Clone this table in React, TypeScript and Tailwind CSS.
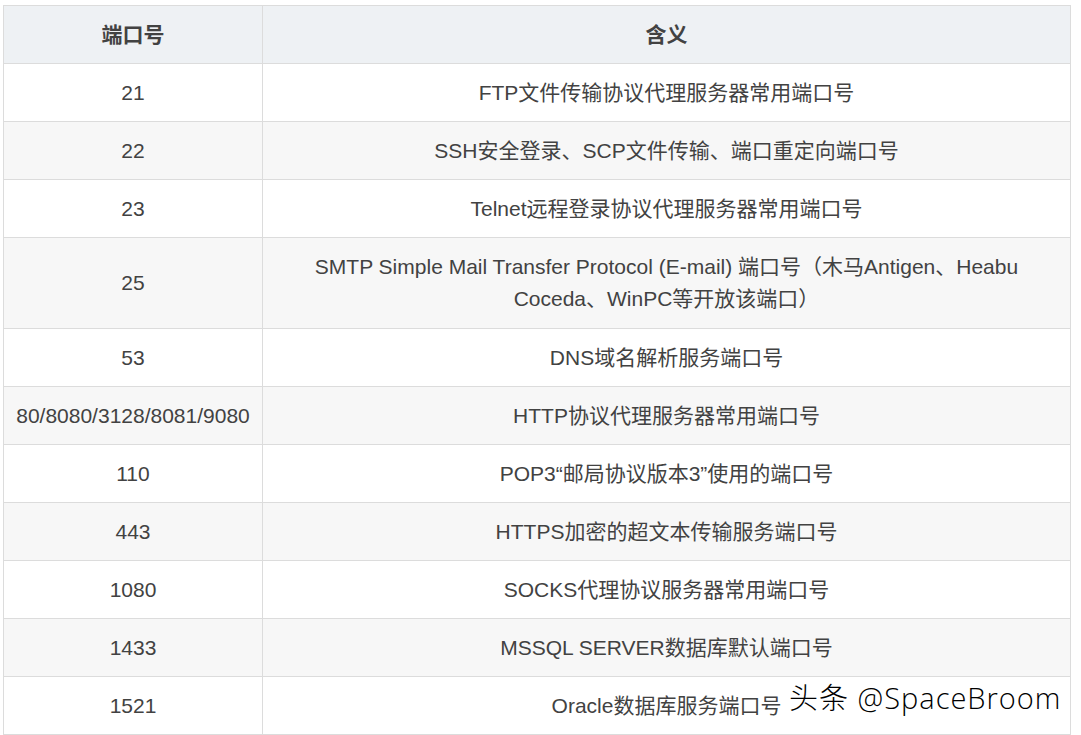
const rows: { port: string; desc: string[] }[] = [
  { port: "21", desc: ["FTP文件传输协议代理服务器常用端口号"] },
  { port: "22", desc: ["SSH安全登录、SCP文件传输、端口重定向端口号"] },
  { port: "23", desc: ["Telnet远程登录协议代理服务器常用端口号"] },
  {
    port: "25",
    desc: [
      "SMTP Simple Mail Transfer Protocol (E-mail) 端口号（木马Antigen、Heabu",
      "Coceda、WinPC等开放该端口）",
    ],
  },
  { port: "53", desc: ["DNS域名解析服务端口号"] },
  { port: "80/8080/3128/8081/9080", desc: ["HTTP协议代理服务器常用端口号"] },
  { port: "110", desc: ["POP3“邮局协议版本3”使用的端口号"] },
  { port: "443", desc: ["HTTPS加密的超文本传输服务端口号"] },
  { port: "1080", desc: ["SOCKS代理协议服务器常用端口号"] },
  { port: "1433", desc: ["MSSQL SERVER数据库默认端口号"] },
  { port: "1521", desc: ["Oracle数据库服务端口号"] },
];

export default function App() {
  return (
    <div
      className="relative h-[735px] w-[1081px] overflow-hidden bg-white pl-[3px] pt-[5px] text-[#424242]"
      style={{ fontFamily: '"Liberation Sans", "Noto Sans CJK SC", sans-serif' }}
    >
      <table className="w-[1068px] border-collapse text-center text-[21px] leading-[32px]">
        <thead>
          <tr className="h-[58px] bg-[#eef1f4]">
            <th className="w-[259px] border border-[#dcdcdc] font-bold">端口号</th>
            <th className="border border-[#dcdcdc] font-bold">含义</th>
          </tr>
        </thead>
        <tbody>
          {rows.map((row, i) => (
            <tr
              key={row.port}
              className={`${row.desc.length > 1 ? "h-[91px]" : "h-[58px]"} ${
                i % 2 === 1 ? "bg-[#f7f7f7]" : "bg-white"
              }`}
            >
              <td className="border border-[#dcdcdc] px-1">{row.port}</td>
              <td className="border border-[#dcdcdc] px-2">
                {row.desc.map((line) => (
                  <div key={line}>{line}</div>
                ))}
              </td>
            </tr>
          ))}
        </tbody>
      </table>

      {/* watermark */}
      <div
        className="absolute left-[789px] top-[679px] text-[29px] leading-[38px] tracking-[1px] text-black"
        style={{
          fontFamily: '"Open Sans", "Noto Sans CJK SC", sans-serif',
          fontWeight: 300,
          textShadow: "1px 1px 0 #fff, -1px -1px 0 #fff, 1px -1px 0 #fff, -1px 1px 0 #fff",
        }}
      >
        头条 @SpaceBroom
      </div>
    </div>
  );
}
